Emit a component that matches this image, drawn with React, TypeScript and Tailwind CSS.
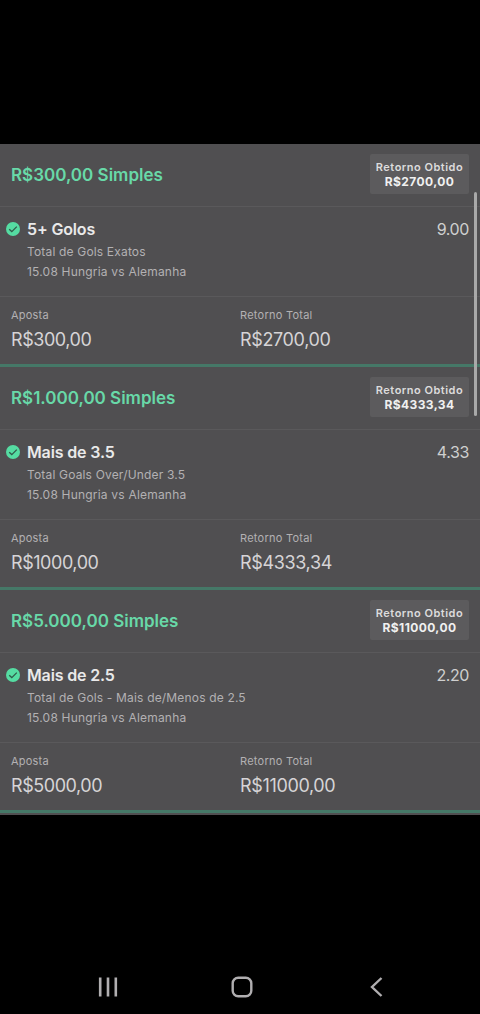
import React from 'react';

interface Bet {
  title: string;
  pick: string;
  market: string;
  event: string;
  odds: string;
  stake: string;
  payout: string;
}

const bets: Bet[] = [
  {
    title: 'R$300,00 Simples',
    pick: '5+ Golos',
    market: 'Total de Gols Exatos',
    event: '15.08 Hungria vs Alemanha',
    odds: '9.00',
    stake: 'R$300,00',
    payout: 'R$2700,00',
  },
  {
    title: 'R$1.000,00 Simples',
    pick: 'Mais de 3.5',
    market: 'Total Goals Over/Under 3.5',
    event: '15.08 Hungria vs Alemanha',
    odds: '4.33',
    stake: 'R$1000,00',
    payout: 'R$4333,34',
  },
  {
    title: 'R$5.000,00 Simples',
    pick: 'Mais de 2.5',
    market: 'Total de Gols - Mais de/Menos de 2.5',
    event: '15.08 Hungria vs Alemanha',
    odds: '2.20',
    stake: 'R$5000,00',
    payout: 'R$11000,00',
  },
];

const WonIcon = () => (
  <svg className="w-3.5 h-3.5 shrink-0" viewBox="0 0 14 14" fill="none">
    <circle cx="7" cy="7" r="7" fill="#55dca2" />
    <path d="M3.2 7.2 5.8 9.6l5-5" stroke="#31594a" strokeWidth="1.3" />
  </svg>
);

const BetCard = ({ bet }: { bet: Bet }) => (
  <div className="h-[223px] flex flex-col border-b-3 border-[#457867]">
    <div className="h-[63px] flex items-start justify-between px-[11px] pt-2.5 border-b border-[#5a595b]">
      <h2 className="text-[17px] leading-[43px] font-semibold text-[#68d9a8]">{bet.title}</h2>
      <div className="w-[99px] h-10 flex flex-col items-center pt-1.5 rounded-xs bg-[#5c5b5d] whitespace-nowrap">
        <span className="text-[11px] leading-[14px] font-semibold tracking-[0.5px] text-[#dcdcdc]">Retorno Obtido</span>
        <span className="text-[12px] leading-[15px] font-bold tracking-[0.4px] text-[#f0f0f0]">{bet.payout}</span>
      </div>
    </div>

    <div className="h-[90px] flex items-start pl-1.5 pr-[11px] pt-3 border-b border-[#5a595b]">
      <div className="h-5 flex items-center mr-[7px]">
        <WonIcon />
      </div>
      <div className="flex-1">
        <h3 className="text-[16px] leading-5 font-semibold tracking-[-0.15px] text-[#e9e9e9]">{bet.pick}</h3>
        <p className="mt-[3px] text-[12px] leading-5 tracking-[0.17px] text-[#b3b1b3]">{bet.market}</p>
        <p className="text-[12px] leading-5 tracking-[0.2px] text-[#b3b1b3]">{bet.event}</p>
      </div>
      <span className="text-[16px] leading-5 tracking-[-0.4px] text-[#cfcfcf]">{bet.odds}</span>
    </div>

    <div className="flex-1 grid grid-cols-2 pt-2.5">
      <div className="pl-[11px]">
        <p className="text-[11px] leading-4 tracking-[0.2px] text-[#b3b1b3]">Aposta</p>
        <p className="mt-[5px] text-[18px] leading-6 tracking-[-0.45px] text-[#d6d4d6]">{bet.stake}</p>
      </div>
      <div>
        <p className="text-[11px] leading-4 tracking-[0.25px] text-[#b3b1b3]">Retorno Total</p>
        <p className="mt-[5px] text-[18px] leading-6 tracking-[-0.35px] text-[#d6d4d6]">{bet.payout}</p>
      </div>
    </div>
  </div>
);

const NavBar = () => (
  <div className="h-[54px] grid grid-cols-[215px_54px_215px] items-center justify-items-center text-[#b0aeb0]">
    <svg className="w-5 h-5" viewBox="0 0 20 20" stroke="currentColor" strokeWidth="2.6">
      <path d="M2.2 .5v19M10 .5v19M17.8 .5v19" />
    </svg>
    <svg className="w-[22px] h-[22px]" viewBox="0 0 22 22" fill="none" stroke="currentColor" strokeWidth="2.4">
      <rect x="1.7" y="1.7" width="18.6" height="18.6" rx="5.5" />
    </svg>
    <svg className="w-[13px] h-5" viewBox="0 0 13 20" fill="none" stroke="currentColor" strokeWidth="2.4">
      <path d="M11.5 1 2 10l9.5 9" />
    </svg>
  </div>
);

const App = () => {
  return (
    <div className="w-[480px] h-[1014px] flex flex-col justify-between pt-36 bg-black font-['Inter',sans-serif] overflow-hidden">
      <div className="relative h-[671px] bg-[#504f51]">
        {bets.map((bet) => (
          <BetCard key={bet.title} bet={bet} />
        ))}
        {/* scroll thumb */}
        <div className="absolute right-[3px] top-12 w-[3px] h-56 rounded-full bg-[#a9a9a9]" />
      </div>
      <NavBar />
    </div>
  );
};

export default App;
